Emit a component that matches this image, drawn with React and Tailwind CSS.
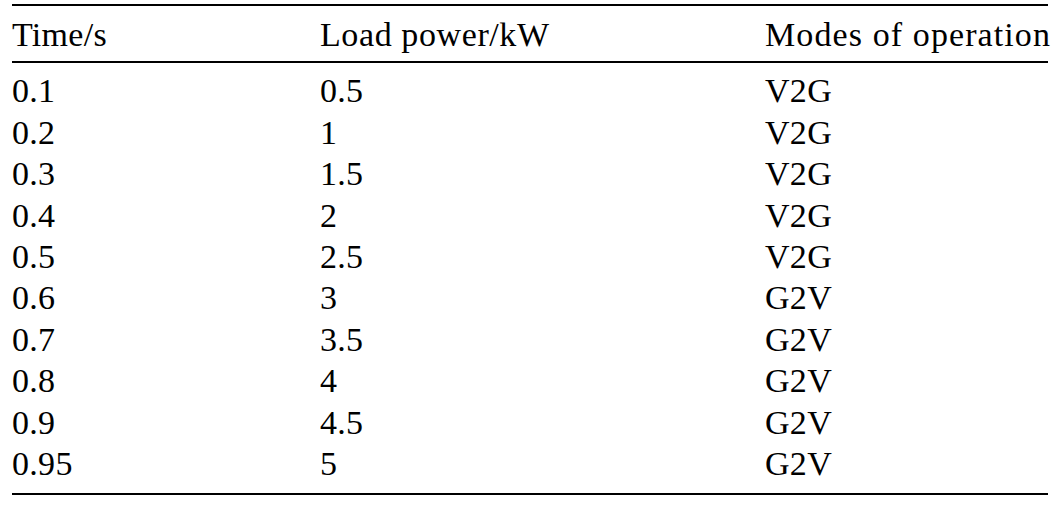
import React from 'react';

const rows = [
  ['0.1', '0.5', 'V2G'],
  ['0.2', '1', 'V2G'],
  ['0.3', '1.5', 'V2G'],
  ['0.4', '2', 'V2G'],
  ['0.5', '2.5', 'V2G'],
  ['0.6', '3', 'G2V'],
  ['0.7', '3.5', 'G2V'],
  ['0.8', '4', 'G2V'],
  ['0.9', '4.5', 'G2V'],
  ['0.95', '5', 'G2V'],
];

export default function App() {
  return (
    <div className="w-[1056px] h-[506px] bg-white text-black pt-[4px] pl-[12px]" style={{ fontFamily: '"Liberation Serif", "Times New Roman", serif' }}>
      <div className="w-[1036px] text-[34px] leading-[41.4px] whitespace-nowrap">
        {/* Header */}
        <div className="border-t-2 border-b-2 border-black pt-[8px] pb-[6px] grid grid-cols-[308px_445px_1fr]">
          <div className="tracking-[0.3px]">Time/s</div>
          <div className="tracking-[0.6px]">Load power/kW</div>
          <div className="tracking-[1.1px]">Modes of operation</div>
        </div>

        {/* Body */}
        <div className="border-b-2 border-black pt-[7px] pb-[9px]">
          {rows.map((r, i) => (
            <div key={i} className="grid grid-cols-[308px_445px_1fr] tracking-[0.3px]">
              <div>{r[0]}</div>
              <div>{r[1]}</div>
              <div>{r[2]}</div>
            </div>
          ))}
        </div>
      </div>
    </div>
  );
}
